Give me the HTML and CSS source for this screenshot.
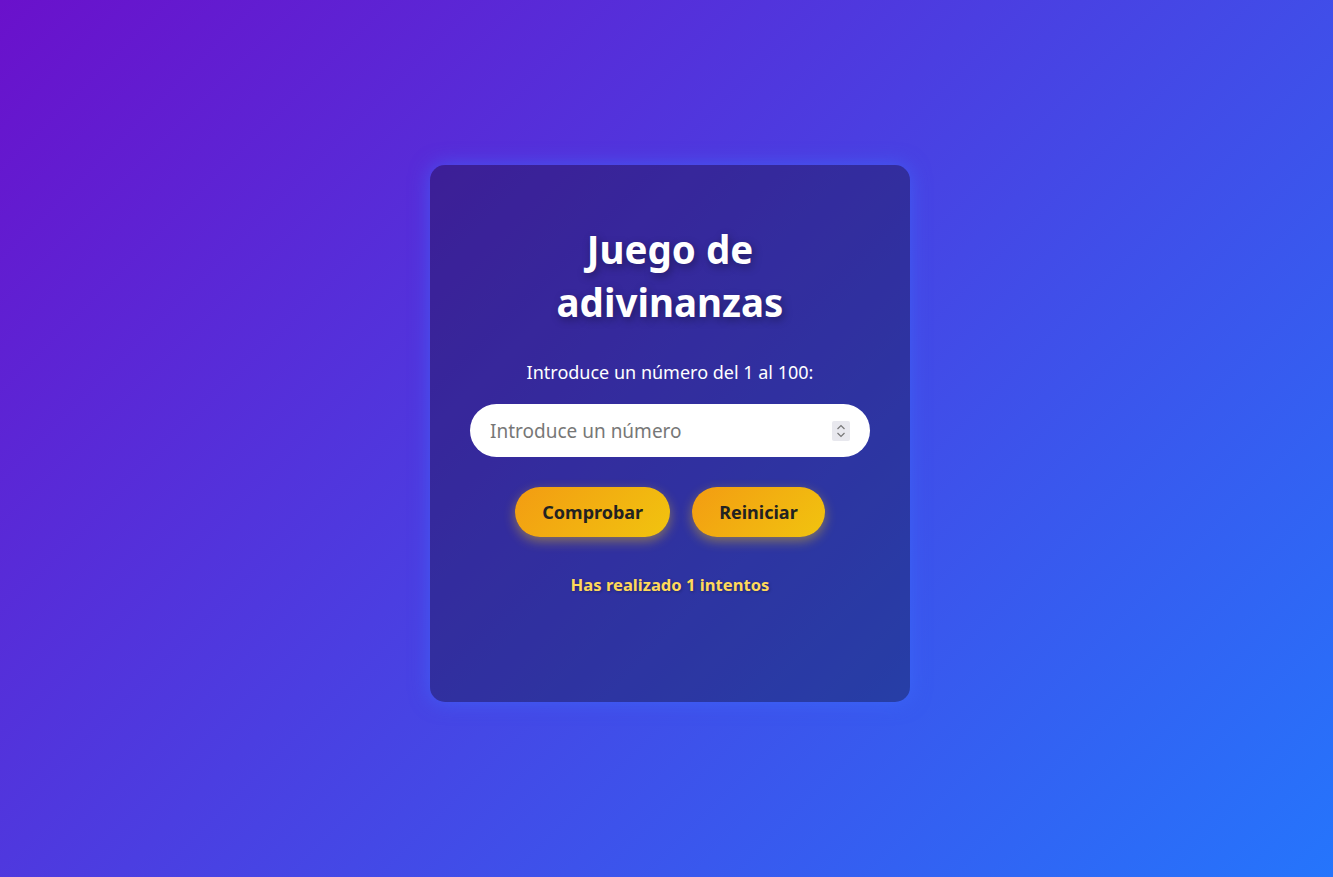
FILE: index.html
```html
<!DOCTYPE html>
<html lang="es">
<head>
<meta charset="utf-8">
<title>Juego de adivinanzas</title>
<link rel="stylesheet" href="styles.css">
</head>
<body>
  <main class="card">
    <h1 class="title">Juego de<br>adivinanzas</h1>
    <p class="label">Introduce un número del 1 al 100:</p>
    <div class="field">
      <input class="field-input" type="text" placeholder="Introduce un número">
      <span class="spinner">
        <svg width="10" height="16" viewBox="0 0 10 16" aria-hidden="true">
          <path d="M1.5 6 L5 2.5 L8.5 6" fill="none" stroke="#777" stroke-width="1.2"/>
          <path d="M1.5 10 L5 13.5 L8.5 10" fill="none" stroke="#777" stroke-width="1.2"/>
        </svg>
      </span>
    </div>
    <div class="actions">
      <button class="btn">Comprobar</button>
      <button class="btn">Reiniciar</button>
    </div>
    <p class="result">Has realizado 1 intentos</p>
  </main>
</body>
</html>
```
FILE: styles.css
```css
* { box-sizing: border-box; }
html, body { height: 100%; }
body {
  margin: 0;
  font-family: "Noto Sans", "Open Sans", sans-serif;
  background: linear-gradient(135deg, #6a11cb 0%, #2575fc 100%);
  display: flex;
  align-items: center;
  justify-content: center;
  padding: 0 0 10px 7px;
  color: #fff;
}
.card {
  width: 480px;
  min-height: 537px;
  padding: 58px 40px 40px;
  background: rgba(0, 0, 0, 0.3);
  border-radius: 15px;
  box-shadow: 0 0 20px rgba(60, 110, 255, 0.6);
  text-align: center;
}
.title {
  margin: 0 0 31px;
  font-size: 38.5px;
  line-height: 53px;
  font-weight: 700;
  text-shadow: 2px 3px 8px rgba(0, 0, 0, 0.35);
}
.label {
  margin: 0 0 20px;
  font-size: 18px;
  line-height: 24px;
}
.field {
  display: flex;
  align-items: center;
  height: 53px;
  background: #fff;
  border-radius: 27px;
  padding: 0 20px;
}
.field-input {
  flex: 1;
  min-width: 0;
  border: none;
  outline: none;
  background: transparent;
  font-family: inherit;
  font-size: 19px;
  color: #333;
  padding: 0;
}
.field-input::placeholder { color: #777; }
.spinner {
  display: flex;
  align-items: center;
  justify-content: center;
  width: 18px;
  height: 20px;
  background: #e8e8ee;
  border-radius: 2px;
}
.actions {
  display: flex;
  justify-content: center;
  gap: 22px;
  margin-top: 30px;
}
.btn {
  height: 50px;
  padding: 0 27px;
  border: none;
  border-radius: 25px;
  background: linear-gradient(135deg, #f39c12, #f1c40f);
  color: #222;
  font-family: inherit;
  font-size: 18px;
  font-weight: 700;
  box-shadow: 0 4px 12px rgba(241, 196, 15, 0.45);
  cursor: pointer;
}
.result {
  margin: 36px 0 0;
  font-size: 16.6px;
  font-weight: 700;
  color: #ffd95a;
  text-shadow: 1px 1px 3px rgba(0, 0, 0, 0.3);
}
```
